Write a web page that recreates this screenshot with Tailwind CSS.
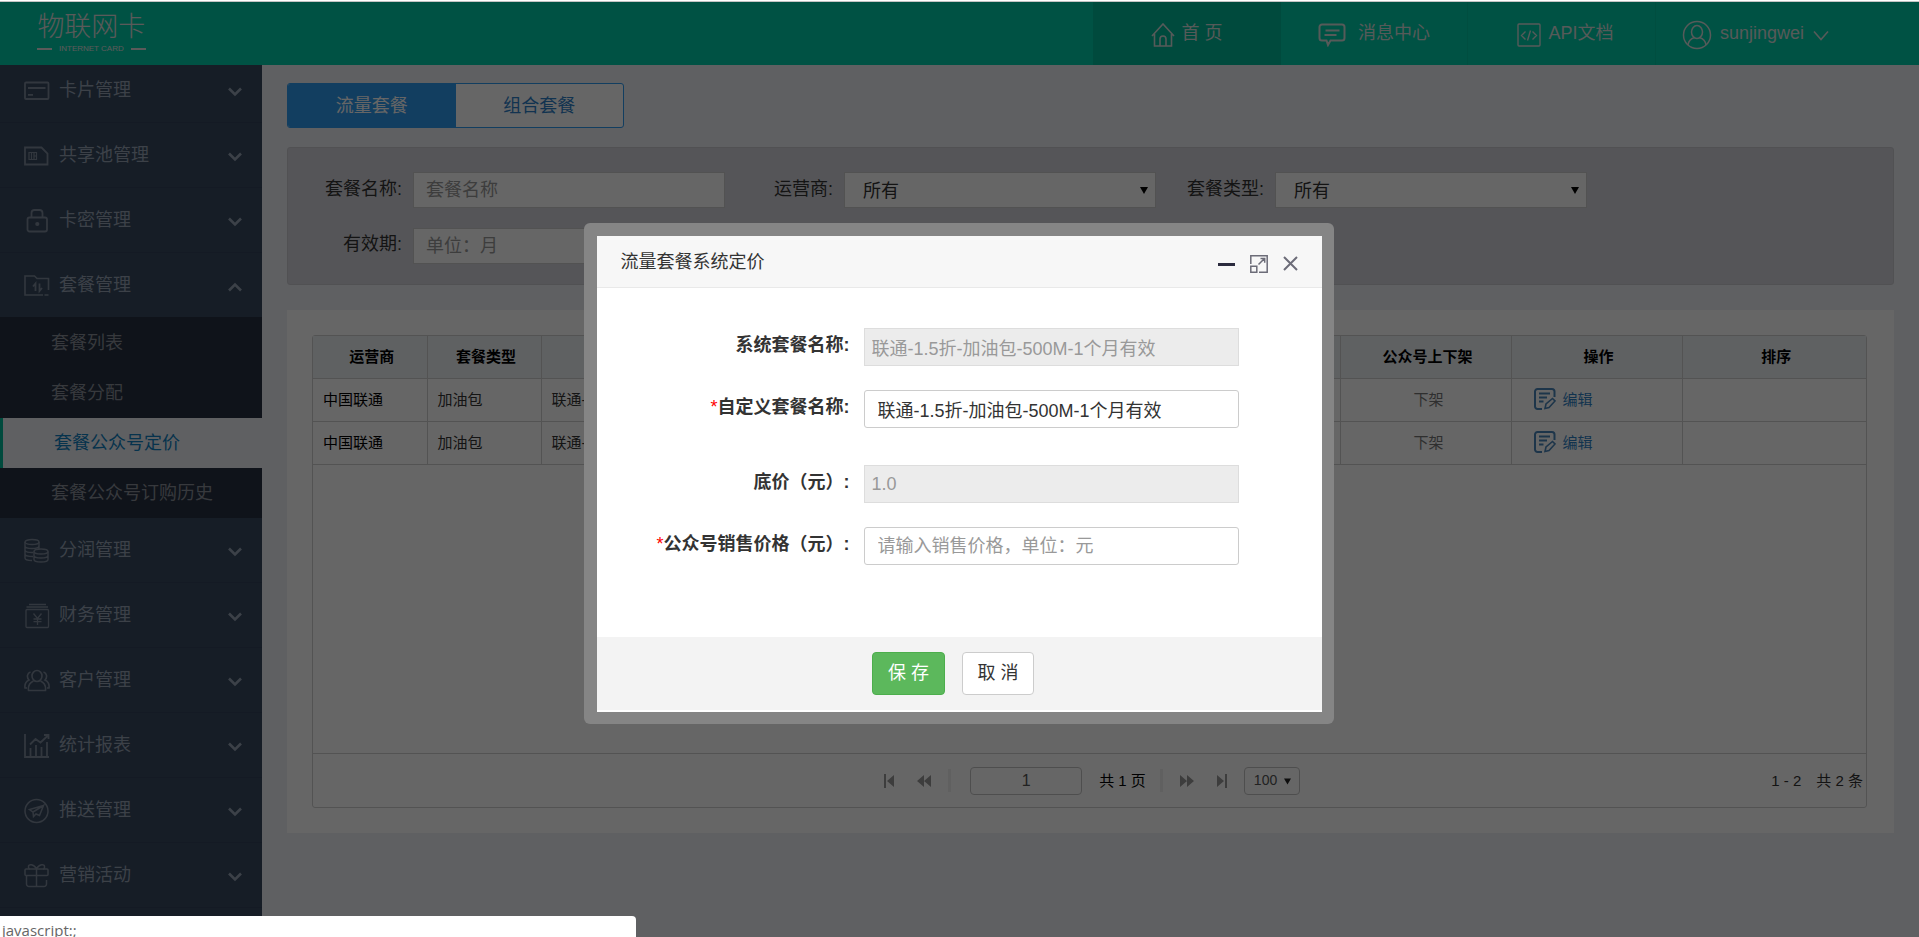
<!DOCTYPE html>
<html lang="zh-CN">
<head>
<meta charset="utf-8">
<title>物联网卡</title>
<script src="https://cdn.jsdelivr.net/npm/@tailwindcss/browser@4"></script>
</head>
<body class="relative flex h-screen flex-col overflow-hidden border-t border-white bg-[#eef0f5] font-['Liberation_Sans','Noto_Sans_CJK_SC',sans-serif] text-lg text-[#333]">

<!-- Top bar -->
<header class="flex h-16 shrink-0 items-stretch border-t border-[#c4c4c4] bg-[#00cdaa] text-white">
  <a href="#" class="ml-[37px] flex flex-col items-center pt-[9px] text-[#e0e0e0]">
    <span class="text-[27px] leading-8 font-light">物联网卡</span>
    <span class="flex items-center gap-[7px] text-[8px] leading-3"><i class="h-0.5 w-[15px] bg-[#e0e0e0]"></i>INTERNET CARD<i class="h-0.5 w-[15px] bg-[#e0e0e0]"></i></span>
  </a>
  <nav class="ml-auto flex text-[#d8e0de]">
    <a href="#" class="flex w-[188px] items-center justify-center gap-1.5 bg-[#00b999] pb-px">
      <svg class="mt-1 size-6" viewBox="0 0 24 24" fill="none" stroke="currentColor" stroke-width="1.6"><path d="M1 13 12 1l11 12M3.500 11v12h17V11M9 23v-7a3 3 0 0 1 6 0v7"/></svg>
      <span>首 页</span>
    </a>
    <a href="#" class="flex w-[187px] items-center justify-center gap-3 border-r border-[#00c2a1] pb-px">
      <svg class="mt-1 h-6 w-7" viewBox="0 0 28 24" fill="none" stroke="currentColor" stroke-width="2"><path d="M4 1.500h20a2.500 2.500 0 0 1 2.500 2.500v11a2.500 2.500 0 0 1-2.500 2.500H12.500L10 22l-1.500-4.500H4A2.500 2.500 0 0 1 1.500 15V4A2.500 2.500 0 0 1 4 1.500ZM7.500 7.500h14M6.500 12h12"/></svg>
      <span>消息中心</span>
    </a>
    <a href="#" class="flex w-[188px] items-center justify-center gap-[7px] border-r border-[#00c2a1] pb-px pl-2">
      <svg class="mt-1 size-6" viewBox="0 0 24 24" fill="none" stroke="currentColor" stroke-width="1.4"><rect x="1" y="1" width="22" height="22" rx="1"/><path d="m8.500 8.500-4 4 4 4M15.500 8.500l4 4-4 4M13.500 7.500l-3 10"/></svg>
      <span>API文档</span>
    </a>
    <button class="flex w-[263px] items-center gap-2 pb-px pl-[26px]">
      <svg class="mt-1 size-[30px]" viewBox="0 0 30 30" fill="none" stroke="currentColor" stroke-width="1.500"><circle cx="15" cy="15" r="13.500"/><ellipse cx="15" cy="12" rx="5.500" ry="6.500"/><path d="M6 25c.5-4 3-6.500 6.500-7.500M24 25c-.5-4-3-6.500-6.500-7.500"/></svg>
      <span>sunjingwei</span>
      <svg class="mt-1 ml-px h-[11px] w-4" viewBox="0 0 16 11" fill="none" stroke="currentColor" stroke-width="1.6"><path d="m1 1.500 7 8 7-8"/></svg>
    </button>
  </nav>
</header>

<div class="flex min-h-0 flex-1">
  <!-- Sidebar, scrolled down a little -->
  <aside class="w-[262px] shrink-0 overflow-hidden bg-[#37495f] text-[#96a2b4]">
    <nav class="-mt-[7px] flex flex-col">
      <a href="#" class="flex h-[65px] shrink-0 items-center border-b border-[#33435a] pr-5 pl-6">
        <svg class="mt-0.5 mr-[9px] size-[26px] text-[#7e8a9c]" viewBox="0 0 26 26" fill="none" stroke="currentColor" stroke-width="1.8"><rect x="1" y="4.500" width="23.500" height="16.500" rx="1"/><path d="M4 10h17.500M4 16.800h5"/></svg>
        <span>卡片管理</span>
        <svg class="mt-1 ml-auto h-2.5 w-[14px]" viewBox="0 0 14 10" fill="none" stroke="currentColor" stroke-width="2.600"><path d="m1 1.500 6 6 6-6"/></svg>
      </a>
      <a href="#" class="flex h-[65px] shrink-0 items-center border-b border-[#33435a] pr-5 pl-6">
        <svg class="mt-0.5 mr-[9px] size-[26px] text-[#7e8a9c]" viewBox="0 0 26 26" fill="none" stroke="currentColor" stroke-width="1.800"><path d="M1 4.500h16.500l6 6v11H1Z"/><path d="M5 9.500h7.500v7H5Zm2.500 0v7m2.500-7v7m0-3.500h2.500" stroke-width="1.200"/></svg>
        <span>共享池管理</span>
        <svg class="mt-1 ml-auto h-2.5 w-[14px]" viewBox="0 0 14 10" fill="none" stroke="currentColor" stroke-width="2.600"><path d="m1 1.500 6 6 6-6"/></svg>
      </a>
      <a href="#" class="flex h-[65px] shrink-0 items-center border-b border-[#33435a] pr-5 pl-6">
        <svg class="mt-0.5 mr-[9px] size-[26px] text-[#7e8a9c]" viewBox="0 0 26 26" fill="none" stroke="currentColor" stroke-width="1.800"><rect x="3.500" y="9.500" width="19.500" height="14" rx="2"/><path d="M7.500 9.500V5a3 3 0 0 1 3-3h5a3 3 0 0 1 3 3v4.500"/><circle cx="13.300" cy="16" r="1.200" fill="currentColor"/></svg>
        <span>卡密管理</span>
        <svg class="mt-1 ml-auto h-2.5 w-[14px]" viewBox="0 0 14 10" fill="none" stroke="currentColor" stroke-width="2.600"><path d="m1 1.500 6 6 6-6"/></svg>
      </a>
      <a href="#" class="flex h-[65px] shrink-0 items-center border-b border-[#263041] pr-5 pl-6">
        <svg class="mt-0.5 mr-[9px] size-[26px] text-[#7e8a9c]" viewBox="0 0 26 26" fill="none" stroke="currentColor" stroke-width="1.600"><path d="M19 22H1V3h9.500l2.500 2.500h11.500V17M20.500 22h4"/><path d="M11.500 18v-7.500l-2.500 3M15.500 10.500V18l2.500-3" stroke-width="1.800"/></svg>
        <span>套餐管理</span>
        <svg class="mt-1 ml-auto h-2.5 w-[14px]" viewBox="0 0 14 10" fill="none" stroke="currentColor" stroke-width="2.600"><path d="m1 8.500 6-6 6 6"/></svg>
      </a>
      <div class="flex flex-col bg-[#263041] text-[#8a8f99]">
        <a href="#" class="flex h-[50px] items-center pl-[51px]">套餐列表</a>
        <a href="#" class="flex h-[50px] items-center pl-[51px]">套餐分配</a>
        <a href="#" class="flex h-[50px] items-center border-l-[3px] border-[#00b999] bg-[#eef0f5] pl-[51px] text-[#0f7fc0]">套餐公众号定价</a>
        <a href="#" class="flex h-[50px] items-center pl-[51px]">套餐公众号订购历史</a>
      </div>
      <a href="#" class="flex h-[65px] shrink-0 items-center border-b border-[#33435a] pr-5 pl-6">
        <svg class="mt-0.5 mr-[9px] size-[26px] text-[#7e8a9c]" viewBox="0 0 26 26" fill="none" stroke="currentColor" stroke-width="1.400"><ellipse cx="8" cy="4" rx="7" ry="2.500"/><path d="M1 4v16c0 1.500 3 2.500 7 2.500M15 4v7M1 8c0 3.300 14 3.300 14 0M1 12c0 2 4 2.700 8 2.500M1 16c0 1.500 3 2.500 8 2.500"/><ellipse cx="17" cy="13.500" rx="7" ry="2.500"/><path d="M10 13.500v8c0 3.300 14 3.300 14 0v-8M10 17.500c0 3.300 14 3.300 14 0"/></svg>
        <span>分润管理</span>
        <svg class="mt-1 ml-auto h-2.5 w-[14px]" viewBox="0 0 14 10" fill="none" stroke="currentColor" stroke-width="2.600"><path d="m1 1.500 6 6 6-6"/></svg>
      </a>
      <a href="#" class="flex h-[65px] shrink-0 items-center border-b border-[#33435a] pr-5 pl-6">
        <svg class="mt-0.5 mr-[9px] size-[26px] text-[#7e8a9c]" viewBox="0 0 26 26" fill="none" stroke="currentColor" stroke-width="1.300"><rect x="2" y="6.500" width="22.500" height="18" rx="1"/><path d="M2.500 4h21.500M5 1.500h17M9.500 10.500l4 5 4-5M13.500 15.500v6.500M9.500 16h8M9.500 18.700h8"/></svg>
        <span>财务管理</span>
        <svg class="mt-1 ml-auto h-2.5 w-[14px]" viewBox="0 0 14 10" fill="none" stroke="currentColor" stroke-width="2.600"><path d="m1 1.500 6 6 6-6"/></svg>
      </a>
      <a href="#" class="flex h-[65px] shrink-0 items-center border-b border-[#33435a] pr-5 pl-6">
        <svg class="mt-0.5 mr-[9px] size-[26px] text-[#7e8a9c]" viewBox="0 0 26 26" fill="none" stroke="currentColor" stroke-width="1.600"><ellipse cx="13" cy="8" rx="5" ry="5.500"/><path d="M9.500 13c-3.500 1.500-5.500 5-5 9.500h17c.5-4.500-1.500-8-5-9.500M6.500 4C3 5 2.500 9.500 5 12c-3 1.500-4.500 4.500-4 8h2M19.500 4c3.500 1 4 5.500 1.500 8 3 1.500 4.500 4.500 4 8h-2"/></svg>
        <span>客户管理</span>
        <svg class="mt-1 ml-auto h-2.5 w-[14px]" viewBox="0 0 14 10" fill="none" stroke="currentColor" stroke-width="2.600"><path d="m1 1.500 6 6 6-6"/></svg>
      </a>
      <a href="#" class="flex h-[65px] shrink-0 items-center border-b border-[#33435a] pr-5 pl-6">
        <svg class="mt-0.5 mr-[9px] size-[26px] text-[#7e8a9c]" viewBox="0 0 26 26" fill="none" stroke="currentColor" stroke-width="1.800"><path d="M1 1v23h24M6.500 24v-9M12 24V12M17.500 24V14M23 24V9M6 11.500l5.500-5.500 5 3.500L24 2.500M20 2h4.500v4"/></svg>
        <span>统计报表</span>
        <svg class="mt-1 ml-auto h-2.5 w-[14px]" viewBox="0 0 14 10" fill="none" stroke="currentColor" stroke-width="2.600"><path d="m1 1.500 6 6 6-6"/></svg>
      </a>
      <a href="#" class="flex h-[65px] shrink-0 items-center border-b border-[#33435a] pr-5 pl-6">
        <svg class="mt-0.5 mr-[9px] size-[26px] text-[#7e8a9c]" viewBox="0 0 26 26" fill="none" stroke="currentColor" stroke-width="1.500"><circle cx="12.500" cy="13" r="11.500"/><path d="M19.500 7.500 5.500 11.500l3.500 2.500ZM19.500 7.500 9 14l.5 4.500 2.500-2.500 3.500 1.500Z"/></svg>
        <span>推送管理</span>
        <svg class="mt-1 ml-auto h-2.5 w-[14px]" viewBox="0 0 14 10" fill="none" stroke="currentColor" stroke-width="2.600"><path d="m1 1.500 6 6 6-6"/></svg>
      </a>
      <a href="#" class="flex h-[65px] shrink-0 items-center border-b border-[#33435a] pr-5 pl-6">
        <svg class="mt-0.5 mr-[9px] size-[26px] text-[#7e8a9c]" viewBox="0 0 26 26" fill="none" stroke="currentColor" stroke-width="1.500"><rect x="1" y="6" width="23" height="6.500" rx="1"/><path d="M2.500 12.500V21a2.500 2.500 0 0 0 2.500 2.500h15a2.500 2.500 0 0 0 2.500-2.500v-4M12.500 6v17.500M12.500 6C10 1 4 .5 4.500 4c0 1 .5 2 1.500 2M12.500 6c2.500-5 8.500-5.500 8-2 0 1-.5 2-1.500 2"/></svg>
        <span>营销活动</span>
        <svg class="mt-1 ml-auto h-2.5 w-[14px]" viewBox="0 0 14 10" fill="none" stroke="currentColor" stroke-width="2.600"><path d="m1 1.500 6 6 6-6"/></svg>
      </a>
    </nav>
  </aside>

  <!-- Page content -->
  <main class="min-w-0 flex-1 px-[25px] pt-[18px]">
    <div class="flex h-[45px] w-[337px] overflow-hidden rounded-[3px] border border-[#2d9bf0] bg-white">
      <button class="flex-1 bg-[#2d9bf0] text-white">流量套餐</button>
      <button class="flex-1 text-[#2d80c8]">组合套餐</button>
    </div>

    <form class="mt-[19px] flex flex-wrap gap-y-5 rounded-[3px] border border-[#cbcbd0] bg-[#d5d5dc] px-1.5 pt-6 pb-5">
      <div class="flex">
        <label for="name" class="w-[119px] pt-[3px] pr-[11px] text-right">套餐名称:</label>
        <input id="name" type="text" placeholder="套餐名称" class="h-9 w-[312px] border border-[#ccc] bg-white pr-3 pl-3 placeholder:text-[#999]">
      </div>
      <div class="flex">
        <label for="carrier" class="w-[119px] pt-[3px] pr-[11px] text-right">运营商:</label>
        <div class="relative">
          <select id="carrier" class="h-9 w-[312px] appearance-none border border-[#ccc] bg-white pt-0.5 pl-[18px]"><option>所有</option></select>
          <svg class="pointer-events-none absolute top-[15px] right-2 h-[7px] w-2" viewBox="0 0 8 7"><path d="M0 0h8L4 7Z"/></svg>
        </div>
      </div>
      <div class="flex">
        <label for="type" class="w-[119px] pt-[3px] pr-[11px] text-right">套餐类型:</label>
        <div class="relative">
          <select id="type" class="h-9 w-[312px] appearance-none border border-[#ccc] bg-white pt-0.5 pl-[18px]"><option>所有</option></select>
          <svg class="pointer-events-none absolute top-[15px] right-2 h-[7px] w-2" viewBox="0 0 8 7"><path d="M0 0h8L4 7Z"/></svg>
        </div>
      </div>
      <div class="flex">
        <label for="valid" class="w-[119px] pt-0.5 pr-[11px] text-right">有效期:</label>
        <input id="valid" type="text" placeholder="单位：月" class="h-9 w-[312px] border border-[#ccc] bg-white pr-3 pl-3 placeholder:text-[#999]">
      </div>
    </form>

    <section class="mt-[25px] bg-white py-[25px] pr-[27px] pl-[25px]">
      <div class="flex flex-col rounded-[3px] border border-[#d0d0d0] text-[15px]">
        <div class="h-[418px] border-b border-[#d0d0d0]">
          <table class="w-full table-fixed border-collapse text-black">
            <colgroup><col class="w-[114px]"><col class="w-[114px]"><col class="w-[341px]"><col class="w-[228px]"><col class="w-[230px]"><col class="w-[171px]"><col class="w-[171px]"><col></colgroup>
            <thead>
              <tr class="h-[42px] border-b border-[#d0d0d0] bg-[#eef2f6]">
                <th class="border-r border-[#d0d0d0] pl-1">运营商</th>
                <th class="border-r border-[#d0d0d0] pl-1">套餐类型</th>
                <th class="border-r border-[#d0d0d0] pl-1">套餐名称</th>
                <th class="border-r border-[#d0d0d0] pl-1">底价</th>
                <th class="border-r border-[#d0d0d0] pl-1">销售价格</th>
                <th class="border-r border-[#d0d0d0] pl-1">公众号上下架</th>
                <th class="border-r border-[#d0d0d0] pl-1">操作</th>
                <th class="pl-1">排序</th>
              </tr>
            </thead>
            <tbody>
              <tr class="h-[43px] border-b border-[#d0d0d0]">
                <td class="border-r border-[#d0d0d0] pl-2.5">中国联通</td>
                <td class="border-r border-[#d0d0d0] pl-2.5 text-[#333]">加油包</td>
                <td class="border-r border-[#d0d0d0] pl-2.5 text-[#333]">联通-1.5折-加油包-500M-1个月有效</td>
                <td class="border-r border-[#d0d0d0]"></td>
                <td class="border-r border-[#d0d0d0]"></td>
                <td class="border-r border-[#d0d0d0] pl-1.5 text-center text-[#777]">下架</td>
                <td class="border-r border-[#d0d0d0] pl-[22px]">
                  <a href="#" class="flex items-center gap-[7px] text-[#2f7fc4]"><svg class="size-[22px]" viewBox="0 0 22 22" fill="none" stroke="#4a85b8" stroke-width="2"><path d="M20.500 9V3.500a2.500 2.500 0 0 0-2.500-2.500H3.500A2.500 2.500 0 0 0 1 3.500v15A2.500 2.500 0 0 0 3.500 21H8M5 5.500h11M5 9.500h8M5 13.500h4.500"/><path d="m11 20.500 1-4.500 6.500-5.500 2.500 2.500-6 6.500Z" stroke-width="1.600"/></svg>编辑</a>
                </td>
                <td></td>
              </tr>
              <tr class="h-[43px] border-b border-[#d0d0d0]">
                <td class="border-r border-[#d0d0d0] pl-2.5">中国联通</td>
                <td class="border-r border-[#d0d0d0] pl-2.5 text-[#333]">加油包</td>
                <td class="border-r border-[#d0d0d0] pl-2.5 text-[#333]">联通-1.5折-加油包-500M-1个月有效</td>
                <td class="border-r border-[#d0d0d0]"></td>
                <td class="border-r border-[#d0d0d0]"></td>
                <td class="border-r border-[#d0d0d0] pl-1.5 text-center text-[#777]">下架</td>
                <td class="border-r border-[#d0d0d0] pl-[22px]">
                  <a href="#" class="flex items-center gap-[7px] text-[#2f7fc4]"><svg class="size-[22px]" viewBox="0 0 22 22" fill="none" stroke="#4a85b8" stroke-width="2"><path d="M20.500 9V3.500a2.500 2.500 0 0 0-2.500-2.500H3.500A2.500 2.500 0 0 0 1 3.500v15A2.500 2.500 0 0 0 3.500 21H8M5 5.500h11M5 9.500h8M5 13.500h4.500"/><path d="m11 20.500 1-4.500 6.500-5.500 2.500 2.500-6 6.500Z" stroke-width="1.600"/></svg>编辑</a>
                </td>
                <td></td>
              </tr>
            </tbody>
          </table>
        </div>
        <!-- Pager -->
        <div class="grid h-[53px] grid-cols-[1fr_auto_1fr] items-center pr-[3px]">
          <span></span>
          <div class="flex items-center pl-2 text-[#999]">
            <button aria-label="第一页"><svg class="h-[14px] w-2.5" viewBox="0 0 10 14" fill="currentColor"><path d="M0 0h2v14H0ZM10 1v12L3 7Z"/></svg></button>
            <button aria-label="上一页" class="ml-[23px]"><svg class="h-[14px] w-[14px]" viewBox="0 0 14 14" fill="currentColor"><path d="M7 1v12L0 7ZM14 1v12L7 7Z"/></svg></button>
            <i class="ml-[17px] h-[23px] w-[3px] bg-[#f0f0f0]"></i>
            <input aria-label="页码" type="text" value="1" class="ml-[19px] h-7 w-28 rounded-sm border border-[#c4c4c4] text-center text-base text-[#555]">
            <span class="ml-[17px] text-black">共 1 页</span>
            <i class="ml-[14px] h-[23px] w-[3px] bg-[#f0f0f0]"></i>
            <button aria-label="下一页" class="ml-[17px]"><svg class="h-[14px] w-[14px]" viewBox="0 0 14 14" fill="currentColor"><path d="M0 1v12l7-6ZM7 1v12l7-6Z"/></svg></button>
            <button aria-label="最后一页" class="ml-[23px]"><svg class="h-[14px] w-2.5" viewBox="0 0 10 14" fill="currentColor"><path d="M8 0h2v14H8ZM0 1v12l7-6Z"/></svg></button>
            <div class="relative ml-[17px]">
              <select aria-label="每页条数" class="h-7 w-14 appearance-none rounded-sm border border-[#c4c4c4] bg-white pl-[9px] text-[14px] text-[#555]"><option>100</option></select>
              <svg class="pointer-events-none absolute top-[11px] right-[9px] h-[7px] w-[7px]" viewBox="0 0 8 7" fill="#222"><path d="M0 0h8L4 7Z"/></svg>
            </div>
          </div>
          <span class="flex justify-end gap-[15px]"><span>1 - 2</span><span>共 2 条</span></span>
        </div>
      </div>
    </section>
  </main>
</div>

<!-- Modal -->
<div class="absolute inset-0 top-px flex items-start justify-center bg-black/60 pt-[221px] pr-0.5">
  <div role="dialog" aria-labelledby="dlg-title" class="w-[750px] rounded-md bg-[#858585] p-[13px] pr-3 pb-3">
    <form class="bg-white pb-0.5">
      <div class="flex h-[52px] items-center border-b border-[#e9e9e9] bg-[#f7f7f7] pr-6 pl-6">
        <h2 id="dlg-title">流量套餐系统定价</h2>
        <div class="mt-1 ml-auto flex items-center gap-[15px] text-[#6c6c78]">
          <button type="button" aria-label="最小化"><svg class="h-[18px] w-[17px]" viewBox="0 0 17 18"><path d="M0 8h17v3H0Z" fill="#2b2b3e"/></svg></button>
          <button type="button" aria-label="最大化"><svg class="size-[18px]" viewBox="0 0 18 18" fill="none" stroke="currentColor" stroke-width="1.500"><path d="M.8 9V.8h16.400v16.400H9M.8 11.200h6v6h-6ZM8.500 9.500l6-6M10.500 3.500h4.200v4.200"/></svg></button>
          <button type="button" aria-label="关闭"><svg class="size-[15px]" viewBox="0 0 15 15" fill="none" stroke="currentColor" stroke-width="2"><path d="m1 1 13 13M14 1 1 14"/></svg></button>
        </div>
      </div>
      <div class="grid grid-cols-[253px_375px] gap-x-[14px] pt-10 pb-[72px]">
        <label for="sys" class="pt-[3px] text-right font-bold">系统套餐名称:</label>
        <input id="sys" type="text" disabled value="联通-1.5折-加油包-500M-1个月有效" class="mb-6 h-[38px] border border-[#ddd] bg-[#ececec] px-[7px] text-[#999]">
        <label for="custom" class="pt-[3px] text-right font-bold"><span class="font-normal text-[#f00]">*</span>自定义套餐名称:</label>
        <input id="custom" type="text" value="联通-1.5折-加油包-500M-1个月有效" class="mb-[37px] h-[38px] rounded-[3px] border border-[#ccc] px-[13px]">
        <label for="base" class="pt-[3px] text-right font-bold">底价（元）:</label>
        <input id="base" type="text" disabled value="1.0" class="mb-6 h-[38px] border border-[#ddd] bg-[#ececec] px-[7px] text-[#999]">
        <label for="price" class="pt-[3px] text-right font-bold"><span class="font-normal text-[#f00]">*</span>公众号销售价格（元）:</label>
        <input id="price" type="text" placeholder="请输入销售价格，单位：元" class="h-[38px] rounded-[3px] border border-[#ccc] px-[13px] placeholder:text-[#999]">
      </div>
      <div class="flex justify-center gap-[17px] bg-[#f3f3f3] pt-[15px] pr-3 pb-[15px]">
        <button type="submit" class="h-[43px] w-[73px] rounded border border-[#4cae4c] bg-[#5cb85c] pb-0.5 text-white">保 存</button>
        <button type="button" class="h-[43px] w-[72px] rounded border border-[#ccc] bg-white pb-0.5">取 消</button>
      </div>
    </form>
  </div>
</div>

<!-- Browser status bubble -->
<div class="absolute bottom-0 left-0 h-[21px] w-[636px] rounded-tr bg-white pt-1 pl-0.5 font-['Open_Sans',sans-serif] text-[15px] leading-5 text-[#666]">javascript:;</div>
</body>
</html>
